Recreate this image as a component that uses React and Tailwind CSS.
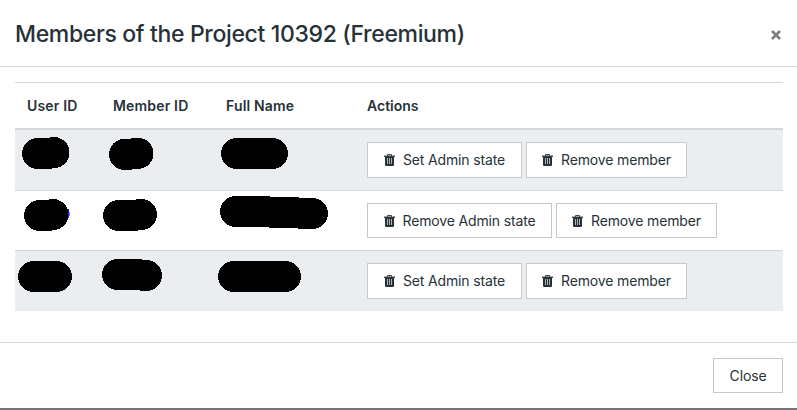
const Trash = () => (
  <svg className="h-[12px] w-[11px] shrink-0" viewBox="0 0 11 12" aria-hidden="true">
    <path d="M3.5 1.8V.6h4v1.2" fill="none" stroke="#263238" strokeWidth="1" />
    <path d="M0 1.6h11v1.3H0z" fill="#263238" />
    <path d="M1 2.5h9v8.3q0 1.2-1.2 1.2H2.2Q1 12 1 10.8z" fill="#263238" />
    <path d="M3.5 4v6M5.5 4v6M7.5 4v6" stroke="#fff" strokeOpacity=".7" strokeWidth=".9" />
  </svg>
);

const Button = ({ icon, width, children }) => (
  <button
    className={`flex h-full shrink-0 items-center justify-center border border-[#c8c8c8] bg-white text-[14px] leading-5 tracking-[-0.15px] whitespace-nowrap text-[#263238] ${width}`}
  >
    {icon && <Trash />}
    <span className={icon ? "ml-2" : ""}>{children}</span>
  </button>
);

// Each redaction mark is one round-capped pen stroke, given relative to its row.
const rows = [
  {
    box: "h-[60px] pt-3 pb-3 bg-[#eaeef1]",
    action: "Set Admin state",
    width: "w-[155px]",
    marks: ["M22.5 23.5H33L39 22.5", "M109.5 24.4H112L123 23.4", "M221.5 23.5H257.5"],
  },
  {
    box: "h-[60px] pt-3 pb-3 border-t border-[#cfd8dc] bg-white",
    action: "Remove Admin state",
    width: "w-[185px]",
    blue: true,
    marks: ["M24.5 24.5H33L38 23.5", "M103.5 24.5H118L126.5 23.5", "M220.5 20.5H240L297.5 22.5"],
  },
  {
    box: "h-[61px] pt-3 pb-3 border-t border-[#cfd8dc] bg-[#eaeef1]",
    action: "Set Admin state",
    width: "w-[155px]",
    marks: ["M18.5 25.5H41.5", "M102.5 23.5H120L131.5 24.5", "M218.5 25.5H270.5"],
  },
];

export default function App() {
  return (
    <div className="flex h-[410px] w-[797px] flex-col overflow-hidden border-b-2 border-[#757575] bg-white font-['Inter',sans-serif] text-[#263238]">
      <header className="flex h-[67px] shrink-0 items-center justify-between border-b border-[#cfd8dc] pr-[16px] pl-[15px]">
        <h4 className="pt-[2px] text-[23px] leading-8 font-medium tracking-[-0.35px] whitespace-nowrap">
          Members of the Project 10392 (Freemium)
        </h4>
        <button aria-label="Close" className="mt-1 h-[10px] w-[10px]">
          <svg className="block" width="10" height="10" viewBox="0 0 10 10">
            <path d="M1 1l8 8M9 1L1 9" stroke="#7d7f80" strokeWidth="2.7" />
          </svg>
        </button>
      </header>

      <main className="h-[275px] shrink-0 px-[15px] pt-[15px]">
        <div className="w-[768px]">
          <div className="grid h-[48px] grid-cols-[86px_113px_141px_1fr] items-center border-t border-b-2 border-t-[#cfd8dc] border-b-[#cfd8dc] pl-3 text-[14px] font-semibold tracking-[0.17px] whitespace-nowrap">
            <span>User ID</span>
            <span>Member ID</span>
            <span>Full Name</span>
            <span className="tracking-normal">Actions</span>
          </div>
          {rows.map((row, i) => (
            <div key={i} className={`flex ${row.box}`}>
              <svg className="-mt-3 h-[59px] w-[352px] shrink-0" viewBox="0 0 352 59">
                <g
                  fill="none"
                  stroke="#000"
                  strokeWidth="31"
                  strokeLinecap="round"
                  strokeLinejoin="round"
                  shapeRendering="crispEdges"
                >
                  {row.marks.map((d) => (
                    <path key={d} d={d} />
                  ))}
                </g>
                {row.blue && <path d="M53 18h1v3h.6v4H54v2h-1z" fill="#2020ff" />}
              </svg>
              <div className={`flex gap-1 ${i === 1 ? "h-[35px]" : "h-[36px]"}`}>
                <Button icon width={row.width}>{row.action}</Button>
                <Button icon width="w-[161px]">Remove member</Button>
              </div>
            </div>
          ))}
        </div>
      </main>

      <footer className="flex flex-1 justify-end border-t border-[#cfd8dc] pt-[15px] pr-[14px]">
        <div className="h-[35px]">
          <Button width="w-[70px]">Close</Button>
        </div>
      </footer>
    </div>
  );
}
